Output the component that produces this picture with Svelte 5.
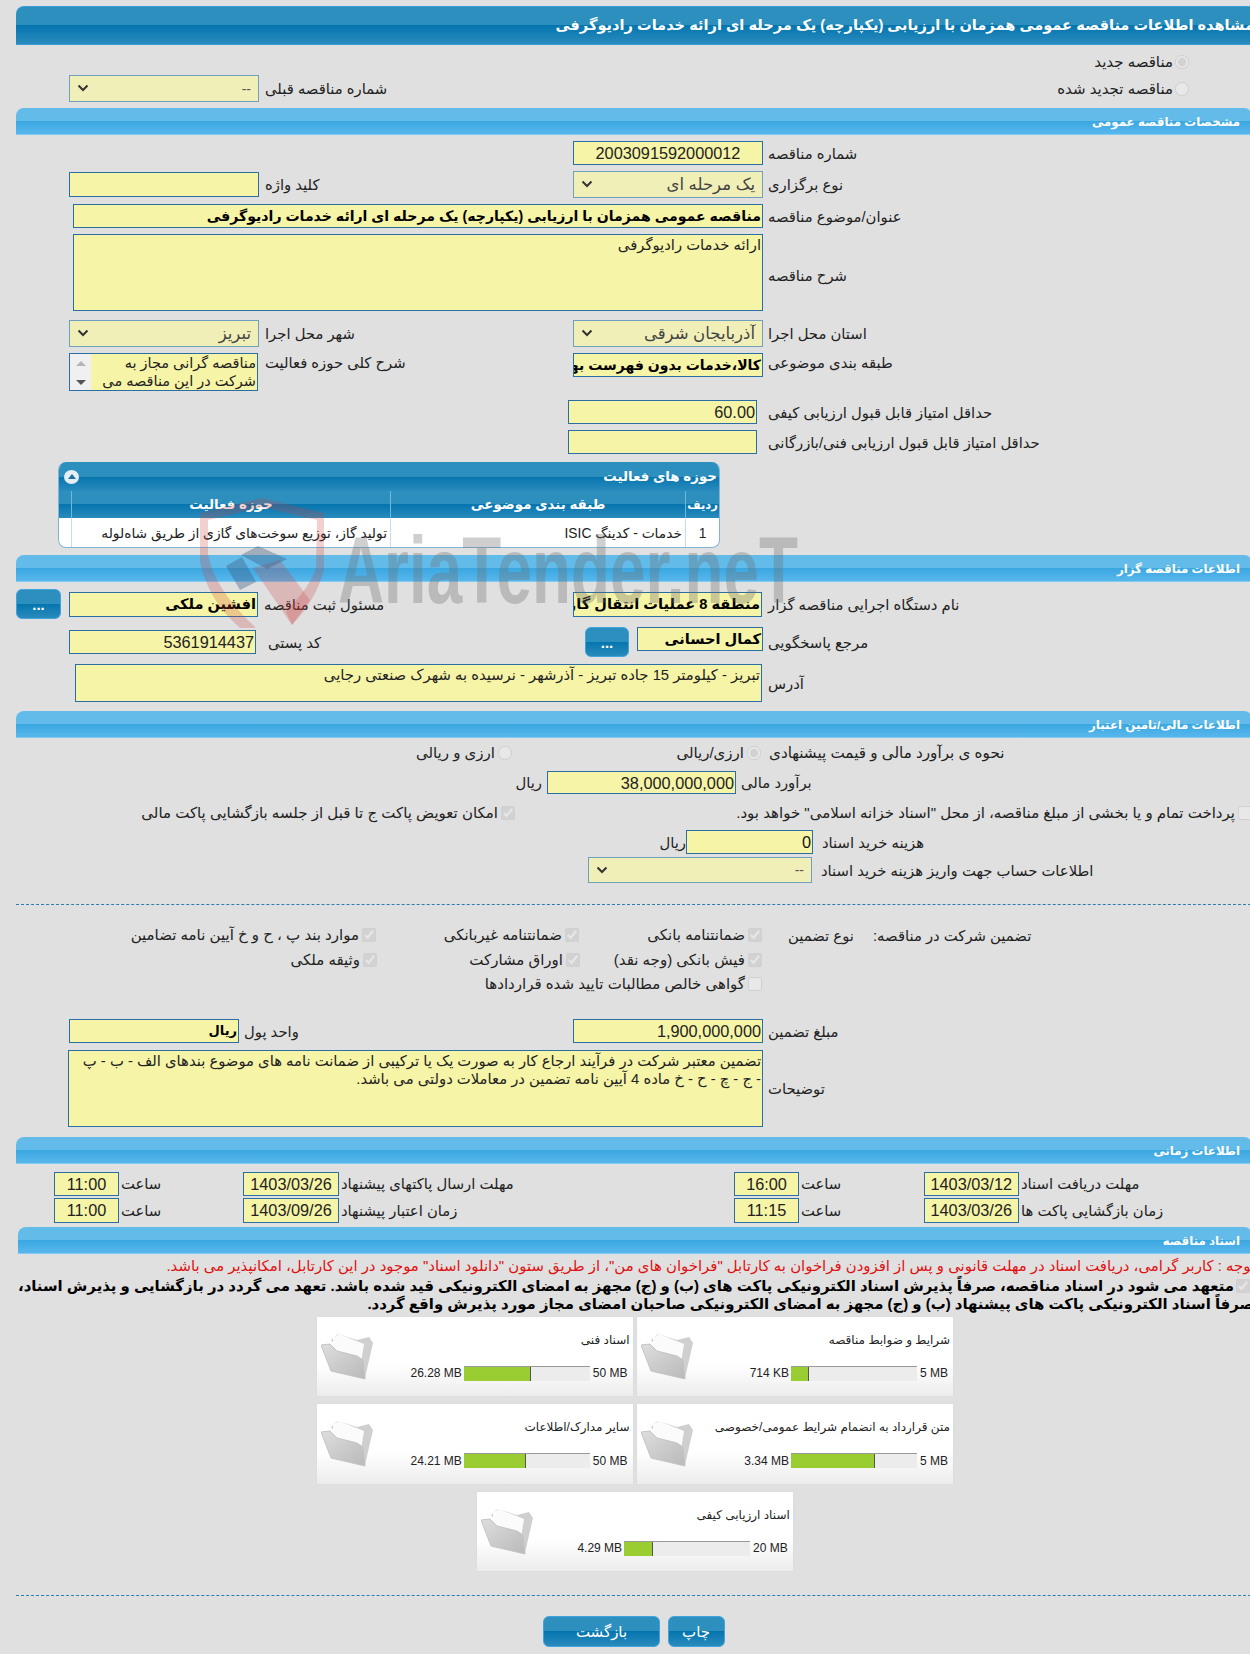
<script>
  const cards = [
    { title: 'شرایط و ضوابط مناقصه', used: '714 KB', max: '5 MB', fill: 18 },
    { title: 'اسناد فنی', used: '26.28 MB', max: '50 MB', fill: 67 },
    { title: 'متن قرارداد به انضمام شرایط عمومی/خصوصی', used: '3.34 MB', max: '5 MB', fill: 84 },
    { title: 'سایر مدارک/اطلاعات', used: '24.21 MB', max: '50 MB', fill: 62 },
    { title: 'اسناد ارزیابی کیفی', used: '4.29 MB', max: '20 MB', fill: 29 }
  ];
</script>

{#snippet chev()}
  <svg class="chev" viewBox="0 0 12 8" width="12" height="8"><path d="M1.5 1.5 L6 6 L10.5 1.5" fill="none" stroke="#333" stroke-width="2"/></svg>
{/snippet}

<div class="page">
  <div class="head">مشاهده اطلاعات مناقصه عمومی همزمان با ارزیابی (یکپارچه) یک مرحله ای ارائه خدمات رادیوگرفی</div>

  <div class="top1">
    <label class="opt"><input type="radio" checked disabled /><span>مناقصه جدید</span></label>
  </div>
  <div class="top2">
    <div class="sel lsel"><span class="val grey">--</span>{@render chev()}</div>
    <span class="lab lab-prev">شماره مناقصه قبلی</span>
    <label class="opt opt2"><input type="radio" disabled /><span>مناقصه تجدید شده</span></label>
  </div>

  <div class="sec">مشخصات مناقصه عمومی</div>

  <div class="g r1">
    <div class="fld c4 num centered">2003091592000012</div>
    <span class="lab c5">شماره مناقصه</span>
  </div>
  <div class="g r2">
    <div class="fld c2 kw"></div>
    <span class="lab c3">کلید واژه</span>
    <div class="sel c4"><span class="val">یک مرحله ای</span>{@render chev()}</div>
    <span class="lab c5">نوع برگزاری</span>
  </div>
  <div class="g r3">
    <div class="fld wide bold">مناقصه عمومی همزمان با ارزیابی (یکپارچه) یک مرحله ای ارائه خدمات رادیوگرفی</div>
    <span class="lab c5">عنوان/موضوع مناقصه</span>
  </div>
  <div class="g r4">
    <div class="fld wide area">ارائه خدمات رادیوگرفی</div>
    <span class="lab c5 low">شرح مناقصه</span>
  </div>
  <div class="g r5">
    <div class="sel c2"><span class="val">تبریز</span>{@render chev()}</div>
    <span class="lab c3">شهر محل اجرا</span>
    <div class="sel c4"><span class="val">آذربایجان شرقی</span>{@render chev()}</div>
    <span class="lab c5">استان محل اجرا</span>
  </div>
  <div class="g r6">
    <div class="list c2">
      <div class="bar"><i class="up"></i><i class="down"></i></div>
      <div class="ltext">مناقصه گرانی مجاز به شرکت در این مناقصه می</div>
    </div>
    <span class="lab c3 tall">شرح کلی حوزه فعالیت</span>
    <div class="fld c4 bold cat">کالا،خدمات بدون فهرست بها</div>
    <span class="lab c5 tall">طبقه بندی موضوعی</span>
  </div>
  <div class="g r7">
    <div class="fld c4 nudge num">60.00</div>
    <span class="lab c5">حداقل امتیاز قابل قبول ارزیابی کیفی</span>
  </div>
  <div class="g r8">
    <div class="fld c4 nudge"></div>
    <span class="lab c5">حداقل امتیاز قابل قبول ارزیابی فنی/بازرگانی</span>
  </div>

  <div class="panel">
    <div class="ptitle">
      <span class="collapse"><svg viewBox="0 0 8 5" width="8" height="5"><path d="M0 5 L4 0 L8 5 Z" fill="#1d6f9f"/></svg></span>
      <span>حوزه های فعالیت</span>
    </div>
    <div class="prow phead">
      <span></span><span>حوزه فعالیت</span><span>طبقه بندی موضوعی</span><span class="rowh">ردیف</span>
    </div>
    <div class="prow pbody">
      <span></span><span class="end">تولید گاز، توزیع سوخت‌های گازی از طریق شاه‌لوله</span><span class="end">خدمات - کدینگ ISIC</span><span>1</span>
    </div>
  </div>

  <div class="sec s2">اطلاعات مناقصه گزار</div>

  <div class="g r9">
    <button class="btn dots">...</button>
    <div class="fld c2 bold big">افشین ملکی</div>
    <span class="lab c3">مسئول ثبت مناقصه</span>
    <div class="fld c4 bold big">منطقه 8 عملیات انتقال گاز آذربایجان</div>
    <span class="lab c5">نام دستگاه اجرایی مناقصه گزار</span>
  </div>
  <div class="g r10">
    <div class="fld c2 num narrow">5361914437</div>
    <span class="lab c3 ind">کد پستی</span>
    <div class="c4 resp">
      <button class="btn dots">...</button>
      <div class="fld bold big">کمال احسانی</div>
    </div>
    <span class="lab c5">مرجع پاسخگویی</span>
  </div>
  <div class="g r11">
    <div class="fld wide2 area">تبریز - کیلومتر 15 جاده تبریز - آذرشهر - نرسیده به شهرک صنعتی رجایی</div>
    <span class="lab c5">آدرس</span>
  </div>

  <div class="sec s3">اطلاعات مالی/تامین اعتبار</div>

  <div class="f1">
    <span></span>
    <label class="item"><input type="radio" disabled /><span>ارزی و ریالی</span></label>
    <span></span>
    <label class="item"><input type="radio" checked disabled /><span>ارزی/ریالی</span></label>
    <span class="lab ps">نحوه ی برآورد مالی و قیمت پیشنهادی</span>
  </div>
  <div class="f2">
    <span class="lab rial">ریال</span>
    <div class="fld num est">38,000,000,000</div>
    <span class="lab">برآورد مالی</span>
  </div>
  <div class="f3">
    <span></span>
    <label class="item"><input type="checkbox" checked disabled /><span>امکان تعویض پاکت ج تا قبل از جلسه بازگشایی پاکت مالی</span></label>
    <span></span>
    <label class="item"><input type="checkbox" disabled /><span>پرداخت تمام و یا بخشی از مبلغ مناقصه، از محل "اسناد خزانه اسلامی" خواهد بود.</span></label>
  </div>
  <div class="f4">
    <span class="lab rial">ریال</span>
    <div class="fld num dark">0</div>
    <span class="lab after">هزینه خرید اسناد</span>
  </div>
  <div class="f5">
    <div class="sel"><span class="val grey">--</span>{@render chev()}</div>
    <span class="lab">اطلاعات حساب جهت واریز هزینه خرید اسناد</span>
  </div>

  <div class="dash d1"></div>

  <div class="gu gu1">
    <span></span>
    <label class="item"><input type="checkbox" checked disabled /><span>موارد بند پ ، ح و خ آیین نامه تضامین</span></label>
    <label class="item"><input type="checkbox" checked disabled /><span>ضمانتنامه غیربانکی</span></label>
    <label class="item"><input type="checkbox" checked disabled /><span>ضمانتنامه بانکی</span></label>
    <span></span>
    <span class="lab">نوع تضمین</span>
    <span></span>
    <span class="lab">تضمین شرکت در مناقصه:</span>
  </div>
  <div class="gu gu2">
    <span></span>
    <label class="item"><input type="checkbox" checked disabled /><span>وثیقه ملکی</span></label>
    <label class="item"><input type="checkbox" checked disabled /><span>اوراق مشارکت</span></label>
    <label class="item"><input type="checkbox" checked disabled /><span>فیش بانکی (وجه نقد)</span></label>
  </div>
  <div class="gu gu3">
    <label class="item"><input type="checkbox" disabled /><span>گواهی خالص مطالبات تایید شده قراردادها</span></label>
  </div>

  <div class="g r12">
    <div class="fld c2 bold unit">ریال</div>
    <span class="lab c3 ind0">واحد پول</span>
    <div class="fld c4 num">1,900,000,000</div>
    <span class="lab c5">مبلغ تضمین</span>
  </div>
  <div class="g r13">
    <div class="fld wide3 area">تضمین معتبر شرکت در فرآیند ارجاع کار به صورت یک یا ترکیبی از ضمانت نامه های موضوع بندهای الف - ب - پ<br />- ج - چ - ح - خ ماده 4 آیین نامه تضمین در معاملات دولتی می باشد.</div>
    <span class="lab c5">توضیحات</span>
  </div>

  <div class="sec s4">اطلاعات زمانی</div>

  <div class="t t1">
    <span></span>
    <div class="fld tm">11:00</div><span class="lab">ساعت</span>
    <div class="fld dt">1403/03/26</div><span class="lab">مهلت ارسال پاکتهای پیشنهاد</span>
    <div class="fld tm">16:00</div><span class="lab">ساعت</span>
    <div class="fld dt">1403/03/12</div><span class="lab">مهلت دریافت اسناد</span>
  </div>
  <div class="t t2">
    <span></span>
    <div class="fld tm">11:00</div><span class="lab">ساعت</span>
    <div class="fld dt">1403/09/26</div><span class="lab">زمان اعتبار پیشنهاد</span>
    <div class="fld tm">11:15</div><span class="lab">ساعت</span>
    <div class="fld dt">1403/03/26</div><span class="lab">زمان بازگشایی پاکت ها</span>
  </div>

  <div class="sec s5">اسناد مناقصه</div>

  <p class="red">توجه : کاربر گرامی، دریافت اسناد در مهلت قانونی و پس از افزودن فراخوان به کارتابل "فراخوان های من"، از طریق ستون "دانلود اسناد" موجود در این کارتابل، امکانپذیر می باشد.</p>
  <div class="pledge">
    <input type="checkbox" checked disabled />
    <span>متعهد می شود در اسناد مناقصه، صرفاً پذیرش اسناد الکترونیکی پاکت های (ب) و (ج) مجهز به امضای الکترونیکی قید شده باشد. تعهد می گردد در بازگشایی و پذیرش اسناد،</span>
  </div>
  <div class="pledge l2">صرفاً اسناد الکترونیکی پاکت های پیشنهاد (ب) و (ج) مجهز به امضای الکترونیکی صاحبان امضای مجاز مورد پذیرش واقع گردد.</div>

  <div class="cards">
    {#each cards as c}
      <div class="card">
        <svg class="folder" viewBox="0 0 52 47" width="52" height="47">
          <defs>
            <linearGradient id="fg" x1="0" y1="0" x2="1" y2="1"><stop offset="0" stop-color="#dedede"/><stop offset="1" stop-color="#b9b9b9"/></linearGradient>
          </defs>
          <path d="M10 7 L17 1 L36 7 L48 4 L52 10 L44 45 Z" fill="#cfcfcf"/>
          <path d="M12 5 L18 1 L43 11 L40 30 L12 20 Z" fill="#fbfbfb"/>
          <path d="M0 12 L9 11 L16 18 L36 23 L42 27 L44 46 L10 38 Z" fill="url(#fg)" stroke="#c4c4c4" stroke-width="1" stroke-linejoin="round"/>
        </svg>
        <div class="cbody">
          <div class="ctitle">{c.title}</div>
          <div class="cbar">
            <span class="used">{c.used}</span>
            <div class="track"><div class="fill" style="width:{c.fill}px"></div></div>
            <span class="max">{c.max}</span>
          </div>
        </div>
      </div>
    {/each}
  </div>

  <div class="dash d2"></div>

  <div class="actions">
    <button class="btn back">بازگشت</button>
    <button class="btn print">چاپ</button>
  </div>

  <svg class="mark" viewBox="0 0 1250 1654" width="1250" height="1654" aria-hidden="true">
    <path d="M262 498 L324 513 L324 570 Q316 600 292 625 L286 612 Q311 585 316 568 L317 520 L262 507 Z" fill="rgba(205,60,60,.24)"/>
    <path d="M262 498 L200 513 L200 562 Q208 600 240 628 L256 628 Q215 590 208 555 L208 520 L262 507 Z" fill="rgba(205,60,60,.24)"/>
    <path d="M253 568 L280 560 L310 600 L292 625 Z" fill="rgba(205,60,60,.24)"/>
    <path d="M226 566 L242 557 L256 582 L240 590 Z M241 555 L258 546 L287 559 L267 569 Z" fill="rgba(60,90,130,.38)"/>
    <text x="338" y="603" font-family="Liberation Sans" font-weight="700" font-size="94" textLength="460" lengthAdjust="spacingAndGlyphs" fill="rgba(110,110,110,.33)">AriaTender.neT</text>
  </svg>
</div>

<style>
  :global(body) { margin: 0; background: #e0e0e0; }
  .page {
    position: relative; width: 1250px; height: 1654px; overflow: hidden; box-sizing: border-box;
    padding: 6px 0 0 16px; background: #e0e0e0; color: #222;
    font-family: "Liberation Sans", "DejaVu Sans", sans-serif; font-size: 13px;
  }
  .head {
    width: 1240px; height: 39px; box-sizing: border-box; border-radius: 8px 8px 0 0;
    border: 1px solid #3a9bd8; border-width: 1px 0 1px 0;
    background: linear-gradient(#2d8fbe 0 50%, #0575ae 50%, #2a8bbd 100%);
    color: #fff; font-weight: 700; font-size: 14.6px; line-height: 37px; direction: rtl; white-space: nowrap; padding-right: 2px;
  }
  .sec {
    width: 1236px; height: 27px; box-sizing: border-box; margin-top: 6px; border-radius: 8px 8px 0 0;
    border-bottom: 1px solid #7fcbf2;
    background: linear-gradient(#62bbe9 0 50%, #3aa7e0 50%, #58b7ec 100%);
    color: #fff; font-weight: 700; font-size: 11.8px; line-height: 28px; direction: rtl; padding-right: 12px;
  }
  .lab { direction: rtl; text-align: left; white-space: nowrap; font-size: 14.8px; color: #222; }
  .fld {
    box-sizing: border-box; height: 24px; background: #f6f4a6; border: 1px solid #2a6ea6;
    direction: rtl; overflow: hidden; white-space: nowrap; font-size: 14.5px; line-height: 22px; padding: 0 1px; color: #222;
  }
  .bold { font-weight: 700; color: #000; }
  .num { font-size: 16.3px; padding-right: 1px; }
  .centered { text-align: center; }
  .sel {
    box-sizing: border-box; height: 27px; background: #f1efb8; border: 1px solid #6e9fbd;
    display: flex; flex-direction: row-reverse; justify-content: space-between; align-items: center;
    padding: 0 7px; direction: ltr; font-size: 16.5px; color: #444;
  }
  .val { direction: rtl; }
  .val.grey { color: #555; font-size: 14px; }
  .chev { display: block; margin-top: -1px; }
  input[type=radio], input[type=checkbox] { margin: 0; width: 14px; height: 14px; flex: none; opacity: .6; }

  .top1 { height: 30px; display: flex; justify-content: flex-end; align-items: center; padding-right: 61px; padding-top: 3px; box-sizing: border-box; }
  .top2 { height: 27px; display: grid; grid-template-columns: 53px 190px 6px 500px 1fr; align-items: center; padding-right: 61px; }
  .top2 .lsel { grid-column: 2; }
  .top2 .lab-prev { grid-column: 4; }
  .top2 .opt2 { grid-column: 5; justify-self: end; }
  .opt { display: flex; flex-direction: row; direction: rtl; gap: 2px; align-items: center; font-size: 15px; margin: 0; }

  .g { display: grid; grid-template-columns: 53px 190px 314px 190px 1fr; align-items: center; margin-top: 6px; }
  .c2 { grid-column: 2; }
  .c3 { grid-column: 3; padding-left: 6px; }
  .c4 { grid-column: 4; }
  .c5 { grid-column: 5; padding-left: 5px; }
  .r2 { height: 27px; }
  .r2 .kw { height: 25px; }
  .r4 { height: 77px; }
  .low { margin-top: 5px; }
  .r5 { height: 27px; margin-top: 9px; }
  .r6 { height: 38px; align-items: start; }
  .r7 { margin-top: 9px; }
  .nudge { margin: 0 6px 0 -5px; }
  .wide { grid-column: 2 / 5; margin-left: 4px; }
  .bold.wide { font-size: 14.1px; }
  .area { height: 100%; white-space: normal; font-size: 14.8px; line-height: 18.5px; padding-top: 1px; }
  .tall { margin-top: 1px; }
  .cat { font-size: 14px; }
  .list { height: 38px; box-sizing: border-box; border: 1px solid #2a6ea6; background: #f6f4a6; display: flex; margin-right: 1px; }
  .bar { width: 21px; background: #f0f0f0; display: flex; flex-direction: column; align-items: center; justify-content: space-between; padding: 7px 0 5px; box-sizing: border-box; flex: none; }
  .up { width: 0; height: 0; border: 5px solid transparent; border-top: 0; border-bottom: 5px solid #b5b5b5; }
  .down { width: 0; height: 0; border: 5px solid transparent; border-bottom: 0; border-top: 5px solid #555; }
  .ltext { direction: rtl; font-size: 14.5px; line-height: 18px; color: #222; overflow: hidden; flex: 1; padding: 0 1px; }

  .panel { margin: 8px 0 0 42px; width: 662px; height: 86px; box-sizing: border-box; border-radius: 8px; overflow: hidden; background: #fff; border: 1px solid #7fb6d8; border-top: 0; }
  .ptitle { height: 29px; display: flex; justify-content: space-between; align-items: center; padding: 0 2px 0 5px; direction: ltr; color: #fff; font-weight: 700; font-size: 13.4px; background: linear-gradient(#2d8fbe 0 50%, #0575ae 50%, #2a8bbd 100%); }
  .collapse { width: 15px; height: 14px; border-radius: 50%; background: #e4eef4; display: flex; align-items: center; justify-content: center; }
  .prow { display: grid; grid-template-columns: 12px 319px 295px 1fr; direction: ltr; }
  .prow > span { display: flex; align-items: center; justify-content: center; direction: rtl; white-space: nowrap; }
  .phead { height: 27px; color: #fff; font-weight: 700; font-size: 13.4px; background: linear-gradient(#2d8fbe 0 50%, #0575ae 50%, #2a8bbd 100%); }
  .phead > span { border-left: 1px solid #6db7e0; }
  .phead > span:first-child { border-left: 0; }
  .phead > .rowh { font-size: 11.5px; }
  .pbody { height: 30px; font-size: 13.8px; }
  .pbody > span { border-left: 1px solid #c8dcea; }
  .pbody > span:first-child { border-left: 0; }
  .pbody .end { justify-content: flex-start; padding-right: 3px; }

  .s2 { margin-top: 7px; }
  .dots { width: 45px; height: 30px; padding: 0; font-weight: 700; }
  .r9 { grid-template-columns: 45px 8px 189px 315px 189px 1fr; height: 30px; margin-top: 7px; }
  .r9 .c2 { grid-column: 3; }
  .r9 .c3 { grid-column: 4; }
  .r9 .c4 { grid-column: 5; }
  .r9 .c5 { grid-column: 6; padding-left: 6px; }
  .big { font-size: 14.6px; height: 25px; }
  .r10 { height: 30px; margin-top: 8px; }
  .narrow { margin-right: 3px; }
  .ind { padding-left: 9px; }
  .resp { display: flex; gap: 8px; align-items: flex-start; justify-content: flex-end; align-self: start; }
  .resp .btn { flex: none; width: 44px; }
  .resp .fld { width: 126px; height: 24px; }
  .r11 { height: 38px; margin-top: 7px; }
  .wide2 { grid-column: 2 / 5; margin-left: 5.5px; margin-right: 1px; }
  .s3 { margin-top: 9px; }

  .item { display: flex; direction: rtl; align-items: center; gap: 3px; white-space: nowrap; font-size: 15px; margin: 0; }
  .f1 { display: grid; grid-template-columns: 396px 100px 149px 100px 1fr; height: 22px; align-items: center; margin-top: 4px; }
  .ps { padding-left: 8px; font-size: 15.2px; }
  .f2 { display: flex; align-items: center; gap: 5px; padding-left: 502px; height: 23px; margin-top: 7px; }
  .rial { width: 24px; }
  .est { width: 189px; height: 23px; }
  .dark { color: #111; }
  .f3 { display: grid; grid-template-columns: 114px 385px 205px 532px; height: 24px; align-items: center; margin-top: 7px; }
  .f4 { display: flex; align-items: center; padding-left: 646px; height: 24px; margin-top: 5px; }
  .f4 .fld { width: 127px; }
  .after { margin-left: 9px; }
  .f5 { display: flex; align-items: center; gap: 9px; padding-left: 571.5px; margin-top: 3px; }
  .f5 .sel { width: 224.5px; height: 26px; }

  .dash { border-top: 1px dashed #2a7fb0; width: 1240px; }
  .d1 { margin-top: 21px; }
  .gu { display: grid; align-items: center; height: 24.5px; }
  .gu1 { margin-top: 18px; grid-template-columns: 114px 246px 203px 183px 26px 70px 15px 1fr; }
  .gu2 { grid-template-columns: 117px 244px 203px 182px; }
  .gu3 { padding-left: 0; grid-template-columns: 746px; }

  .r12 { grid-template-columns: 53px 170px 334px 190px 1fr; height: 25px; margin-top: 22px; }
  .unit { font-size: 13px; }
  .ind0 { padding-left: 5px; }
  .r13 { height: 77px; }
  .wide3 { grid-column: 1 / 5; margin-left: 51.5px; }
  .s4 { margin-top: 10px; }

  .t { display: grid; grid-template-columns: 38px 65px 124px 96px 395px 65px 124.5px 95.5px 1fr; align-items: center; }
  .t1 { height: 24px; margin-top: 8px; }
  .t2 { height: 25px; margin-top: 2px; }
  .t .fld { height: 100%; font-size: 16.3px; text-align: center; padding: 0; }
  .t .lab { padding-left: 2px; }
  .s5 { margin: 4px 0 0 2px; width: 1234px; }

  .red { margin: 3px 0 0; height: 18px; width: 1239px; direction: rtl; white-space: nowrap; color: #e01010; font-size: 14.9px; line-height: 18px; }
  .pledge { width: 1234px; display: flex; direction: rtl; gap: 2px; align-items: center; white-space: nowrap; font-weight: 700; font-size: 14.9px; line-height: 18px; color: #000; height: 18px; margin-top: 2px; }
  .l2 { margin: 0; width: 1238px; }

  .cards { margin: 4px 0 0 300.3px; width: 637px; direction: rtl; display: flex; flex-wrap: wrap; justify-content: center; gap: 8px 4.5px; }
  .card { direction: ltr; width: 316px; height: 79.5px; box-sizing: border-box; padding: 16px 5px 0 4px; display: flex; gap: 3px; background: linear-gradient(#fff 60%, #ececec); box-shadow: 0 0 1px #cfcfcf; }
  .folder { flex: none; }
  .cbody { flex: 1; min-width: 0; }
  .ctitle { direction: rtl; font-size: 12px; line-height: 14px; white-space: nowrap; margin-right: -2px; }
  .cbar { display: flex; align-items: center; justify-content: flex-end; margin-top: 19px; font-size: 12px; }
  .used { padding-right: 2px; }
  .max { padding-left: 3px; }
  .track { width: 126px; height: 15px; box-sizing: border-box; background: #ececec; border-top: 1px solid #999; }
  .fill { height: 14px; box-sizing: border-box; background: #9acd32; border-right: 1px solid #555; }

  .d2 { margin-top: 24px; }
  .actions { display: flex; gap: 7.5px; margin: 20px 0 0 527px; }
  .btn {
    border: 1px solid #3fa4dd; border-radius: 6px; color: #fff; font-family: inherit;
    background: linear-gradient(#2d8fbe 0 50%, #0575ae 50%, #2a8bbd 100%);
    font-size: 15px; cursor: pointer;
  }
  .back { width: 117px; height: 31px; }
  .print { width: 57px; height: 31px; }
  .mark { position: absolute; left: 0; top: 0; pointer-events: none; }
</style>
